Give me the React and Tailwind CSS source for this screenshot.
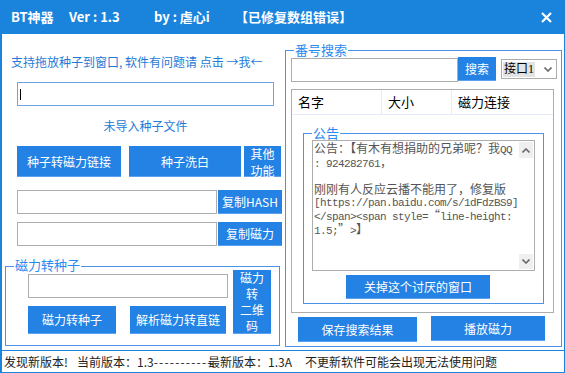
import React from 'react';

const BTN = 'bg-[#2382e4] text-white text-[12px] leading-[16px] flex items-center justify-center shadow-[inset_0_-1px_0_#5aa2f0] shrink-0';
const GRAY_INPUT = 'border border-[#adadad] bg-white shrink-0';

const Legend = ({ children, className = '' }) => (
  <span className={`absolute bg-white px-[1px] text-[13px] leading-[16px] text-[#2a8af0] whitespace-nowrap ${className}`}>
    {children}
  </span>
);

const Mono = ({ children }) => (
  <span className="font-['Liberation_Mono',monospace] text-[11px] tracking-[-0.6px]">{children}</span>
);

const Chevron = ({ up }) => (
  <svg width="8" height="5" viewBox="0 0 8 5">
    <polyline
      points={up ? '0.5,4.5 4,1 7.5,4.5' : '0.5,0.5 4,4 7.5,0.5'}
      fill="none"
      stroke="#6b6b6b"
      strokeWidth="1.6"
    />
  </svg>
);

const App = () => {
  return (
    <div className="w-[565px] h-[373px] bg-white flex flex-col border-l-2 border-r border-b border-[#1a84dd] overflow-hidden font-['Noto_Sans_CJK_SC',sans-serif] text-[#222]">
      {/* 标题栏 */}
      <div className="h-[34px] shrink-0 bg-[#1a84dd] flex items-center pl-[9px] pr-[12px] text-white font-bold text-[13px] leading-[16px] whitespace-nowrap">
        <span className="w-[58px]">BT神器</span>
        <span className="w-[85px]">Ver : 1.3</span>
        <span className="w-[81px]">by : 虐心i</span>
        <span>【已修复数组错误】</span>
        <svg className="ml-auto" width="11" height="11" viewBox="0 0 11 11">
          <path d="M1 1 L10 10 M10 1 L1 10" stroke="white" strokeWidth="2.2" />
        </svg>
      </div>

      <div className="h-[316px] shrink-0 flex">
        {/* 左侧 */}
        <div className="w-[282px] shrink-0 flex flex-col">
          <p className="mt-[20px] ml-[9px] text-[12px] leading-[16px] text-[#1e7ad6] whitespace-nowrap">
            支持拖放种子到窗口, 软件有问题请 点击 →我←
          </p>
          <div className="mt-[12px] ml-[15px] w-[257px] h-[24px] border border-[#6fa3e4] flex items-center pl-[2px]">
            <div className="w-[1px] h-[11px] bg-black" />
          </div>
          <div className="mt-[12px] ml-[15px] w-[257px] text-center text-[12px] leading-[16px] text-[#1e7ad6]">
            未导入种子文件
          </div>
          <div className="mt-[12px] ml-[15px] flex h-[31px]">
            <button className={`${BTN} w-[104px]`}>种子转磁力链接</button>
            <button className={`${BTN} w-[112px] ml-[8px]`}>种子洗白</button>
            <button className={`${BTN} w-[37px] ml-[3px] flex-col leading-[17px]`}>
              <span>其他</span>
              <span>功能</span>
            </button>
          </div>
          <div className="mt-[13px] ml-[15px] flex h-[24px]">
            <div className={`${GRAY_INPUT} w-[200px]`} />
            <button className={`${BTN} w-[64px] ml-[1px]`}>复制HASH</button>
          </div>
          <div className="mt-[8px] ml-[15px] flex h-[24px]">
            <div className={`${GRAY_INPUT} w-[200px]`} />
            <button className={`${BTN} w-[64px] ml-[1px]`}>复制磁力</button>
          </div>

          {/* 磁力转种子 */}
          <div className="relative mt-[20px] ml-[3px] w-[275px] h-[80px] border border-[#4a93e6] flex items-start pl-[22px]">
            <Legend className="left-[8px] -top-[10px]">磁力转种子</Legend>
            <div className="mt-[7px] flex flex-col">
              <div className={`${GRAY_INPUT} w-[200px] h-[24px]`} />
              <div className="mt-[8px] flex">
                <button className={`${BTN} w-[88px] h-[28px]`}>磁力转种子</button>
                <button className={`${BTN} w-[96px] h-[28px] ml-[14px]`}>解析磁力转直链</button>
              </div>
            </div>
            <button className={`${BTN} mt-[3px] ml-[5px] w-[38px] h-[64px] flex-col leading-[16.3px]`}>
              <span>磁力</span>
              <span>转</span>
              <span>二维</span>
              <span>码</span>
            </button>
          </div>
        </div>

        {/* 右侧 番号搜索 */}
        <div className="flex-1 flex flex-col">
          <div className="relative mt-[16px] ml-[1px] w-[277px] h-[297px] border border-[#4a93e6] flex flex-col">
            <Legend className="left-[8px] -top-[9px]">番号搜索</Legend>

            <div className="mt-[6px] ml-[5px] flex items-start">
              <div className={`${GRAY_INPUT} mt-[1px] w-[167px] h-[24px]`} />
              <button className={`${BTN} w-[38px] h-[24px]`}>搜索</button>
              <div className="ml-[5px] mt-[2px] w-[56px] h-[20px] border border-[#adadad] flex items-center pl-[1px] pr-[4px]">
                <span className="bg-[#e3e3e3] text-[12px] leading-[15px] px-[1px] text-black font-['Liberation_Serif','Noto_Sans_CJK_SC',serif]">
                  接口1
                </span>
                <span className="ml-auto">
                  <Chevron />
                </span>
              </div>
            </div>

            <div className="mt-[7px] ml-[5px] w-[263px] h-[224px] border border-[#adadad] flex flex-col">
              <div className="h-[25px] shrink-0 flex border-b border-[#e3ecf8] text-[13px] leading-[16px] text-black">
                <div className="w-[90px] border-r border-[#e3ecf8] pl-[6px] flex items-center">名字</div>
                <div className="w-[70px] border-r border-[#e3ecf8] pl-[6px] flex items-center">大小</div>
                <div className="flex-1 pl-[6px] flex items-center">磁力连接</div>
              </div>

              {/* 公告 */}
              <div className="relative mt-[18px] ml-[11px] w-[241px] h-[171px] border border-[#4a93e6] flex flex-col">
                <Legend className="left-[8px] -top-[9px]">公告</Legend>
                <div className="relative mt-[6px] ml-[8px] w-[223px] h-[131px] border border-[#adadad] pl-[1px] pt-[1px] text-[12px] leading-[12.2px] text-[#555] whitespace-pre">
                  <div>公告：【有木有想捐助的兄弟呢？我<Mono>QQ</Mono></div>
                  <div><Mono>: 924282761</Mono>，</div>
                  <div>&nbsp;</div>
                  <div>刚刚有人反应云播不能用了，修复版</div>
                  <div><Mono>[https://pan.baidu.com/s/1dFdzBS9]</Mono></div>
                  <div><Mono>{'</span><span style='}</Mono>“<Mono>line-height:</Mono></div>
                  <div><Mono>1.5;</Mono>”<Mono>{'>'}</Mono>】</div>
                  <div className="absolute right-[1px] top-[1px] w-[14px] h-[16px] bg-[#efefef] flex items-center justify-center">
                    <Chevron up />
                  </div>
                  <div className="absolute right-[1px] bottom-[1px] w-[14px] h-[15px] bg-[#efefef] flex items-center justify-center">
                    <Chevron />
                  </div>
                </div>
                <button className={`${BTN} mt-[4px] ml-[42px] w-[144px] h-[24px]`}>关掉这个讨厌的窗口</button>
              </div>
            </div>

            <div className="mt-[3px] flex items-start">
              <button className={`${BTN} mt-[1px] ml-[12px] w-[119px] h-[25px]`}>保存搜索结果</button>
              <button className={`${BTN} ml-[14px] w-[114px] h-[25px]`}>播放磁力</button>
            </div>
          </div>
        </div>
      </div>

      {/* 状态栏 */}
      <div className="h-[22px] shrink-0 border-t border-[#1a84dd] flex items-center pl-[2px] text-[12px] leading-[16px] text-[#222] whitespace-pre">
        <span className="w-[73px]">发现新版本!</span>
        <span className="w-[131px]">当前版本：1.3<span className="tracking-[1.2px]">-----------</span></span>
        <span className="w-[97px]">最新版本：1.3A</span>
        <span>不更新软件可能会出现无法使用问题</span>
      </div>
    </div>
  );
};

export default App;
